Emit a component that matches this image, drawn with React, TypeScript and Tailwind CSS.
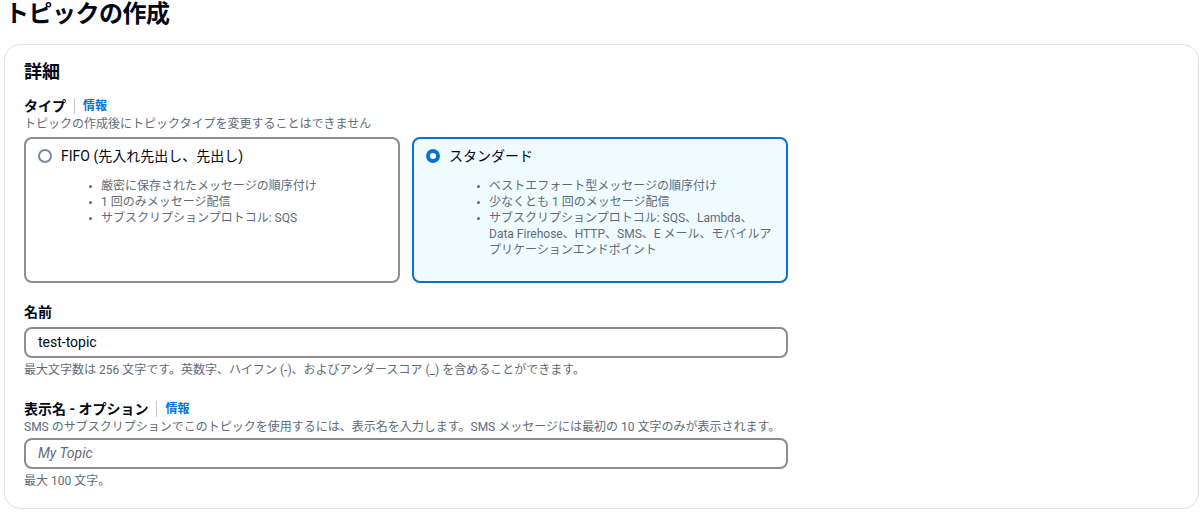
import React from "react";

const font = { fontFamily: 'Roboto, "Noto Sans CJK JP", sans-serif' };

function Bullet({ children }: { children: React.ReactNode }) {
  return (
    <li className="flex items-start text-[12px] leading-[16px] text-[#5f6b7a]">
      <span className="w-[11px] shrink-0 flex justify-start pt-[6.5px]">
        <span className="block w-[3px] h-[3px] rounded-full bg-[#5f6b7a] ml-[-1px]" />
      </span>
      <span>{children}</span>
    </li>
  );
}

function Tile({
  selected,
  label,
  items,
}: {
  selected: boolean;
  label: string;
  items: React.ReactNode[];
}) {
  return (
    <div
      className={
        "h-[146px] rounded-[8px] border-2 px-[12px] pt-[7px] " +
        (selected ? "border-[#0972d3] bg-[#f0fbff]" : "border-[#8c8c94] bg-white")
      }
    >
      <div className="flex items-center h-[20px]">
        {selected ? (
          <span className="block w-[14px] h-[14px] rounded-full border-[4px] border-[#0972d3] bg-white" />
        ) : (
          <span className="block w-[14px] h-[14px] rounded-full border-2 border-[#7d8998] bg-white" />
        )}
        <span className="ml-[9px] text-[14px] leading-[20px] text-[#000716]">{label}</span>
      </div>
      <ul className="mt-[12px] ml-[52px] flex flex-col">
        {items.map((it, i) => (
          <Bullet key={i}>{it}</Bullet>
        ))}
      </ul>
    </div>
  );
}

export default function App() {
  return (
    <div className="bg-white min-h-[513px] pl-[4px] pr-[1px]" style={font}>
      <h1 className="text-[24px] leading-[28px] font-bold text-[#000716] pl-[1px] tracking-[-0.5px]">
        トピックの作成
      </h1>
      <div className="mt-[16px] h-[465px] rounded-[16px] border border-[#e0e2e5] px-[19px] pt-[15px]">
        <h2 className="text-[18px] leading-[24px] font-bold text-[#000716]">詳細</h2>
        <div className="w-[764px]">
          <div className="mt-[12px] flex items-center h-[20px]">
            <span className="text-[14px] font-bold text-[#000716]">タイプ</span>
            <span className="mx-[8px] h-[16px] w-px bg-[#c6c6cd]" />
            <span className="text-[12px] font-bold text-[#0972d3]">情報</span>
          </div>
          <div className="text-[12px] leading-[16px] text-[#5f6b7a]">
            トピックの作成後にトピックタイプを変更することはできません
          </div>
          <div className="mt-[5px] grid grid-cols-2 gap-[12px]">
            <Tile
              selected={false}
              label="FIFO (先入れ先出し、先出し)"
              items={[
                "厳密に保存されたメッセージの順序付け",
                "1 回のみメッセージ配信",
                "サブスクリプションプロトコル: SQS",
              ]}
            />
            <Tile
              selected={true}
              label="スタンダード"
              items={[
                "ベストエフォート型メッセージの順序付け",
                "少なくとも 1 回のメッセージ配信",
                <>
                  <span className="whitespace-nowrap">サブスクリプションプロトコル: SQS、Lambda、</span>
                  <br />
                  <span className="whitespace-nowrap">Data Firehose、HTTP、SMS、E メール、モバイルア</span>
                  <br />
                  <span className="whitespace-nowrap">プリケーションエンドポイント</span>
                </>,
              ]}
            />
          </div>

          <div className="mt-[19px] text-[14px] leading-[20px] font-bold text-[#000716]">名前</div>
          <div className="mt-[5px] h-[31px] rounded-[8px] border-2 border-[#8c8c94] flex items-center px-[12px]">
            <span className="text-[14px] text-[#000716]">test-topic</span>
          </div>
          <div className="mt-[4px] text-[12px] leading-[16px] text-[#5f6b7a]">
            最大文字数は 256 文字です。英数字、ハイフン (-)、およびアンダースコア (_) を含めることができます。
          </div>

          <div className="mt-[21px] flex items-center h-[20px]">
            <span className="text-[14px] font-bold text-[#000716]">表示名 - オプション</span>
            <span className="mx-[8px] h-[16px] w-px bg-[#c6c6cd]" />
            <span className="text-[12px] font-bold text-[#0972d3]">情報</span>
          </div>
          <div className="text-[12px] leading-[16px] text-[#5f6b7a]">
            SMS のサブスクリプションでこのトピックを使用するには、表示名を入力します。SMS メッセージには最初の 10 文字のみが表示されます。
          </div>
          <div className="mt-[3px] h-[31px] rounded-[8px] border-2 border-[#8c8c94] flex items-center px-[12px]">
            <span className="text-[14px] italic text-[#5f6b7a]">My Topic</span>
          </div>
          <div className="mt-[4px] text-[12px] leading-[16px] text-[#5f6b7a]">最大 100 文字。</div>
        </div>
      </div>
    </div>
  );
}
